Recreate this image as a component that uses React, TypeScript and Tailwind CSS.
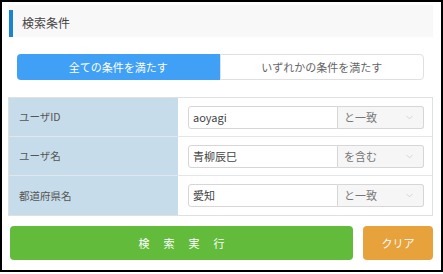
import { ChevronDown } from 'lucide-react';

const ROWS = [
    { label: 'ユーザID', value: 'aoyagi', op: 'と一致' },
    { label: 'ユーザ名', value: '青柳辰巳', op: 'を含む' },
    { label: '都道府県名', value: '愛知', op: 'と一致' }
];

export default function App() {
    return (
        <div className="bg-white w-[443px] h-[274px] font-['Noto_Sans_CJK_JP',sans-serif]">
            <div className="w-[443px] h-[272px] border-2 border-black flex flex-col pl-[6px] pr-[8px] pt-[3px]">

                {/* header */}
                <div className="h-[32px] bg-[#f8f8f8] flex items-end">
                    <div className="w-[4px] h-[27px] bg-[#1a84cf] ml-[1px]" />
                    <div className="self-center text-[12px] text-[#444] ml-[9px] mt-[3px]">検索条件</div>
                </div>

                {/* match mode toggle */}
                <div className="mt-[17px] mx-[9px] h-[26px] flex text-[11px]">
                    <div className="flex-1 bg-[#40a0f6] text-white rounded-l-[4px] flex items-center justify-center">
                        全ての条件を満たす
                    </div>
                    <div className="flex-1 bg-white text-[#666] border border-[#e0e0e0] rounded-r-[4px] flex items-center justify-center">
                        いずれかの条件を満たす
                    </div>
                </div>

                {/* conditions table */}
                <div className="mt-[17px] border border-[#dde1e4] flex flex-col">
                    {ROWS.map((row, idx) => (
                        <div key={idx} className={`flex h-[39px] ${idx < ROWS.length - 1 ? 'border-b border-[#e2e6e9]' : ''}`}>
                            <div className="w-[169px] bg-[#c6dcea] flex items-center pl-[10px] text-[10.5px] text-[#555]">
                                {row.label}
                            </div>
                            <div className="flex-1 flex items-center pl-[10px] pr-[8px]">
                                <div className="flex-1 h-[23px] border border-[#d6d6d6] rounded-l-[3px] flex items-center pl-[4px] text-[11px] text-[#444]">
                                    {row.value}
                                </div>
                                <div className="w-[86px] h-[23px] border border-l-0 border-[#d6d6d6] bg-[#f6f6f6] rounded-r-[3px] flex items-center justify-between pl-[6px] pr-[8px] text-[11px] text-[#777]">
                                    <span>{row.op}</span>
                                    <ChevronDown className="w-[11px] h-[11px] text-[#c4c4c4]" strokeWidth={1.5} />
                                </div>
                            </div>
                        </div>
                    ))}
                </div>

                {/* actions */}
                <div className="mt-[10px] flex gap-[10px] h-[34px]">
                    <button className="flex-1 ml-[2px] bg-[#63bb3c] rounded-[4px] text-white text-[11px] flex items-center justify-center gap-[14px]">
                        <span>検</span><span>索</span><span>実</span><span>行</span>
                    </button>
                    <button className="w-[70px] bg-[#e8a23b] rounded-[4px] text-white text-[11px] flex items-center justify-center">
                        クリア
                    </button>
                </div>

            </div>
        </div>
    );
}
